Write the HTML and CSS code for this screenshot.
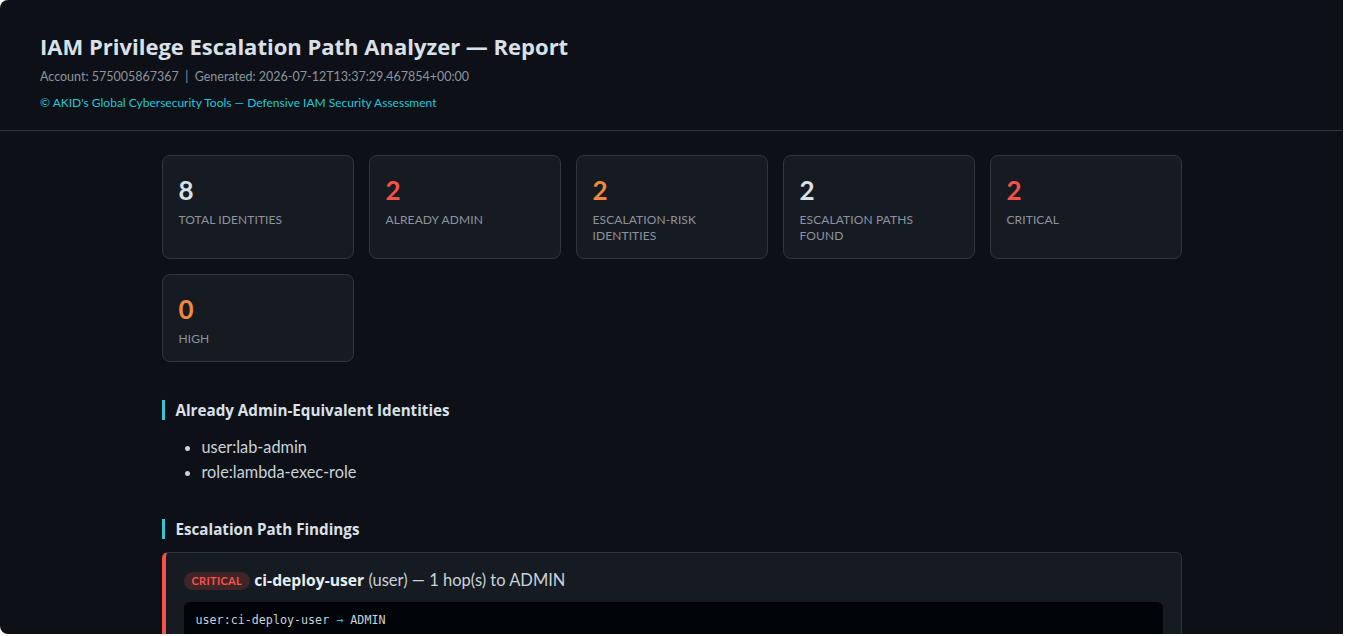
FILE: index.html
```html
<!DOCTYPE html>
<html lang="en">
<head>
  <meta charset="UTF-8" />
  <title>IAM Privilege Escalation Report</title>
  <link rel="stylesheet" href="styles.css">
</head>
<body>
  <div class="window">
    <header class="top">
      <h1>IAM Privilege Escalation Path Analyzer — Report</h1>
      <div class="meta">Account: 575005867367 &nbsp;|&nbsp; Generated: 2026-07-12T13:37:29.467854+00:00</div>
      <div class="credit">© AKID's Global Cybersecurity Tools — Defensive IAM Security Assessment</div>
    </header>

    <main class="container">
      <div class="stats">
        <div class="stat">
          <div class="num">8</div>
          <div class="label">Total Identities</div>
        </div>
        <div class="stat">
          <div class="num red">2</div>
          <div class="label">Already Admin</div>
        </div>
        <div class="stat">
          <div class="num orange">2</div>
          <div class="label">Escalation-Risk Identities</div>
        </div>
        <div class="stat">
          <div class="num">2</div>
          <div class="label">Escalation Paths Found</div>
        </div>
        <div class="stat">
          <div class="num red">2</div>
          <div class="label">Critical</div>
        </div>
        <div class="stat">
          <div class="num orange">0</div>
          <div class="label">High</div>
        </div>
      </div>

      <h2>Already Admin-Equivalent Identities</h2>
      <ul class="admins">
        <li>user:lab-admin</li>
        <li>role:lambda-exec-role</li>
      </ul>

      <h2>Escalation Path Findings</h2>
      <div class="finding critical">
        <div class="finding-head">
          <span class="badge">Critical</span>
          <strong>ci-deploy-user</strong> (user) — 1 hop(s) to ADMIN
        </div>
        <pre class="path">user:ci-deploy-user <span class="arrow">→</span> ADMIN</pre>
      </div>
    </main>
  </div>
</body>
</html>
```

FILE: styles.css
```css
html, body {
  margin: 0;
  background: #ffffff;
}
body {
  font-family: "Lato", "Noto Sans", sans-serif;
  color: #e6edf3;
}
.window {
  width: 1343px;
  height: 634px;
  overflow: hidden;
  background: #0d1117;
  border-radius: 8px 0 0 8px;
}
.top {
  padding: 31px 40px 18px;
  border-bottom: 1px solid #30363d;
}
.top h1 {
  margin: 0;
  font-family: "Open Sans", sans-serif;
  font-size: 22px;
  line-height: 30px;
  font-weight: 700;
  color: #d9e0e8;
}
.meta {
  margin-top: 7px;
  font-size: 12.5px;
  line-height: 18px;
  color: #8b949e;
}
.credit {
  margin-top: 8px;
  font-size: 12px;
  line-height: 18px;
  color: #22c7d6;
}
.container {
  max-width: 1020px;
  margin: 0 auto;
  padding-top: 24px;
}
.stats {
  display: grid;
  grid-template-columns: repeat(5, 1fr);
  gap: 15px;
  margin-bottom: 38px;
}
.stat {
  background: #161b22;
  border: 1px solid #30363d;
  border-radius: 8px;
  padding: 16px 16px 14px;
}
.num {
  font-size: 26px;
  line-height: 36px;
  font-weight: 700;
  color: #d9e0e8;
}
.num.red { color: #f85149; }
.num.orange { color: #f0883e; }
.label {
  margin-top: 4px;
  font-size: 12px;
  line-height: 16px;
  letter-spacing: 0.1px;
  text-transform: uppercase;
  color: #8b949e;
}
h2 {
  margin: 34px 0 13px;
  padding-left: 11px;
  border-left: 3px solid #39c5cf;
  font-family: "Open Sans", sans-serif;
  font-size: 15.2px;
  line-height: 20px;
  font-weight: 700;
  color: #d9e0e8;
}
.admins {
  margin: 0;
  padding: 1px 0 1px 40px;
  font-size: 16.3px;
  line-height: 25px;
  color: #c9d1d9;
}
.finding {
  background: #161b22;
  border: 1px solid #30363d;
  border-left: 4px solid #f85149;
  border-radius: 6px;
  padding: 15px 18px 16px;
}
.finding-head {
  font-size: 16.5px;
  line-height: 24px;
  color: #c9d1d9;
}
.finding-head strong {
  font-family: "Open Sans", sans-serif;
  font-size: 15.7px;
  color: #e6edf3;
}
.badge {
  display: inline-block;
  padding: 0 8px;
  border-radius: 10px;
  background: rgba(248, 81, 73, 0.18);
  color: #f85149;
  font-size: 11px;
  line-height: 18px;
  font-weight: 700;
  letter-spacing: 0.3px;
  text-transform: uppercase;
  vertical-align: 1px;
}
.path {
  margin: 10px 0 0;
  padding: 10px 12px;
  background: #010409;
  border-radius: 6px;
  font-family: "DejaVu Sans Mono", monospace;
  font-size: 11.7px;
  line-height: 16px;
  color: #c9d1d9;
}
.arrow {
  color: #39c5cf;
}
```
